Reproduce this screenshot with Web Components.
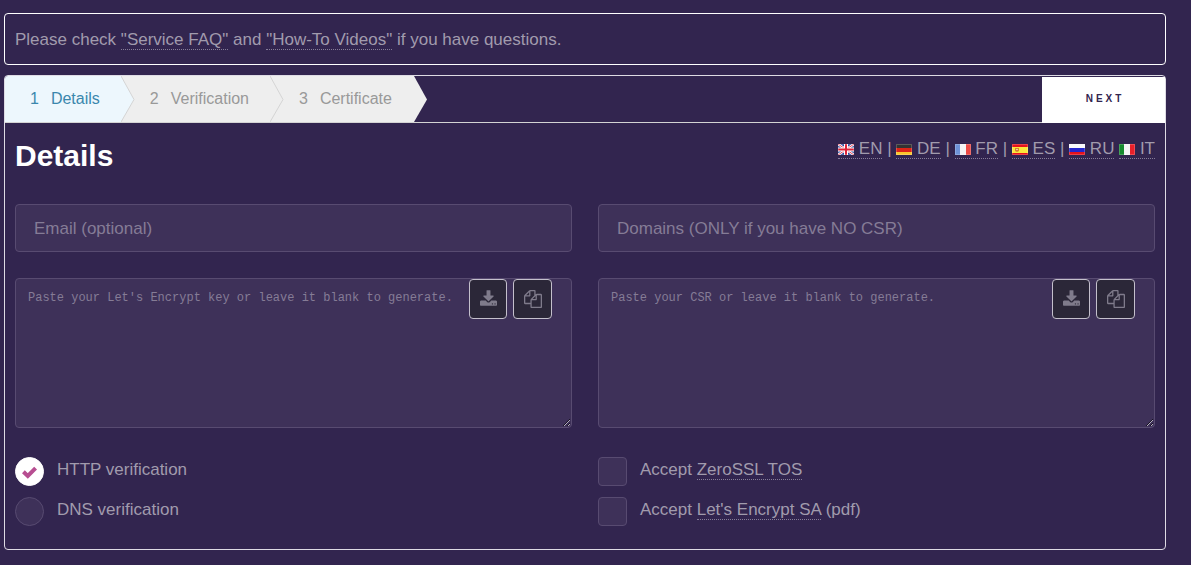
<!DOCTYPE html>
<html lang="en">
<head>
<meta charset="utf-8">
<meta name="viewport" content="width=device-width, initial-scale=1">
<title>Certificate wizard</title>
<style>
  body {
    margin: 0;
    padding: 13px 25px 15px 4px;
    background: #32254f;
    color: #a19bad;
    font: 17px/28px "Liberation Sans", Arial, sans-serif;
    --line: #dedbe4;
    --field: #3e3159;
    --field-line: #584b71;
    --hint: #857c96;
  }
  a { color: inherit; text-decoration: none; border-bottom: 1px dotted #857c98; }
</style>
</head>
<body>
<ssl-notice>Please check <a href="#faq">"Service FAQ"</a> and <a href="#videos">"How-To Videos"</a> if you have questions.</ssl-notice>
<ssl-wizard></ssl-wizard>

<script>
const define = (name, html, setup) => {
  const template = document.createElement('template');
  template.innerHTML = html;
  customElements.define(name, class extends HTMLElement {
    connectedCallback() {
      if (this.shadowRoot) return;
      const root = this.attachShadow({ mode: 'open' });
      root.append(template.content.cloneNode(true));
      if (setup) setup(this, root);
    }
  });
};

define('ssl-notice', `
  <style>
    :host { display: block; border: 1px solid #fff; border-radius: 4px; padding: 12px 10px 10px; margin-bottom: 10px; }
  </style>
  <slot></slot>`);

define('wizard-step', `
  <style>
    :host { display: block; position: relative; height: 46px; padding: 0 21px 0 29px; background: #eee; color: #999; font-size: 16px; line-height: 46px; }
    :host([first]) { padding-left: 25px; border-radius: 3px 0 0 0; }
    :host([last]) { padding-right: 22px; }
    :host([current]) { background: #edf7fd; color: #3a87ad; }
    .number { margin-right: 12px; }
    svg { position: absolute; left: 100%; top: 0; width: 14px; height: 46px; z-index: 1; }
    path { fill: #eee; }
    polyline { fill: none; stroke: #d4d4d4; }
    :host([current]) path { fill: #edf7fd; }
    :host([last]) polyline { display: none; }
  </style>
  <span class="number"></span><slot></slot>
  <svg viewBox="0 0 14 46" aria-hidden="true"><path d="M0 0 13 23.5 0 46z"/><polyline points="0,0 13,23.5 0,46"/></svg>`,
  (el, root) => { root.querySelector('.number').textContent = el.getAttribute('number'); });

define('wizard-bar', `
  <style>
    :host { display: flex; justify-content: space-between; border-bottom: 1px solid #d4d4d4; }
    .steps { display: flex; }
    button { width: 123px; height: 46px; margin: 1px 0 -1px; border: 0; padding: 0 0 2px; background: #fff; color: #32254f; font: bold 10px/44px "Liberation Sans", Arial, sans-serif; letter-spacing: 3px; text-indent: 3px; }
  </style>
  <div class="steps">
    <wizard-step number="1" first current>Details</wizard-step>
    <wizard-step number="2">Verification</wizard-step>
    <wizard-step number="3" last>Certificate</wizard-step>
  </div>
  <button type="button">NEXT</button>`);

const flags = {
  en: '<path fill="#27489c" d="M0 0h16v11H0z"/><path stroke="#fff" stroke-width="2.4" d="M0 0l16 11M16 0L0 11"/><path stroke="#e0485a" stroke-width="1" d="M0 0l16 11M16 0L0 11"/><path stroke="#fff" stroke-width="4" d="M8 0v11M0 5.5h16"/><path stroke="#dc2338" stroke-width="2" d="M8 0v11M0 5.5h16"/>',
  de: '<path fill="#333" d="M0 0h16v4H0z"/><path fill="#dc2418" d="M0 4h16v4H0z"/><path fill="#fbc62c" d="M0 8h16v3H0z"/>',
  fr: '<path fill="#6e93d8" d="M0 0h5v11H0z"/><path fill="#f4f4f4" d="M5 0h6v11H5z"/><path fill="#ec4a45" d="M11 0h5v11h-5z"/>',
  es: '<path fill="#e5141c" d="M0 0h16v11H0z"/><path fill="#fbe83a" d="M0 3h16v6H0z"/><path fill="#d98032" d="M3 4h4v3l-2 1-2-1z"/><path fill="#f6d0a0" d="M4 5h2v1H4z"/>',
  ru: '<path fill="#f8f8fa" d="M0 0h16v4H0z"/><path fill="#2424cc" d="M0 4h16v4H0z"/><path fill="#e4121c" d="M0 8h16v3H0z"/>',
  it: '<path fill="#178a2e" d="M0 0h5v11H0z"/><path fill="#f4f4f4" d="M5 0h6v11H5z"/><path fill="#e8202a" d="M11 0h5v11h-5z"/>'
};
define('lang-link', `
  <style>
    :host { display: inline; }
    a { color: inherit; text-decoration: none; border-bottom: 1px dotted #857c98; }
    svg { width: 16px; height: 11px; vertical-align: -1px; }
  </style>
  <a><svg viewBox="0 0 16 11" aria-hidden="true"><g class="flag"></g><path fill="none" stroke="#fff" stroke-opacity=".2" d="M.5.5h15v10H.5z"/></svg> <slot></slot></a>`,
  (el, root) => {
    const code = el.getAttribute('code');
    root.querySelector('a').href = '#' + code;
    root.querySelector('.flag').innerHTML = flags[code];
  });

define('text-field', `
  <style>
    :host { display: block; }
    input { display: block; box-sizing: border-box; width: 100%; height: 48px; margin: 0; padding: 2px 18px 0; border: 1px solid var(--field-line); border-radius: 4px; background: var(--field); color: #fff; font: inherit; outline: 0; }
    input::placeholder { color: var(--hint); opacity: 1; }
  </style>
  <input>`,
  (el, root) => {
    const input = root.querySelector('input');
    input.type = el.getAttribute('type') || 'text';
    input.placeholder = el.getAttribute('hint');
    input.setAttribute('aria-label', el.getAttribute('hint'));
  });

define('pem-area', `
  <style>
    :host { display: block; position: relative; }
    textarea { display: block; box-sizing: border-box; width: 100%; height: 150px; margin: 0; padding: 9px 12px; border: 1px solid var(--field-line); border-radius: 4px; background: var(--field); color: #fff; font: 12px/20px "Liberation Mono", "Courier New", monospace; resize: vertical; outline: 0; }
    textarea::placeholder { color: var(--hint); opacity: 1; }
    .tools { position: absolute; top: 1px; right: 20px; display: flex; gap: 6px; }
    button { display: grid; justify-items: center; align-items: start; box-sizing: border-box; width: 38px; height: 40px; margin: 0; padding: 10px 0 0; border: 1px solid #c4c0cc; border-radius: 4px; background: #2b2738; color: #7f7b8b; }
    button + button { width: 39px; }
    svg { display: block; width: 17px; height: 16px; fill: currentColor; }
    button + button svg { width: 18px; height: 18px; }
  </style>
  <textarea></textarea>
  <div class="tools">
    <button type="button" aria-label="Download"><svg viewBox="0 0 1664 1536"><path d="M1280 1344q0-26-19-45t-45-19-45 19-19 45 19 45 45 19 45-19 19-45zm256 0q0-26-19-45t-45-19-45 19-19 45 19 45 45 19 45-19 19-45zm128-224v320q0 40-28 68t-68 28h-1472q-40 0-68-28t-28-68v-320q0-40 28-68t68-28h465l135 136q58 56 136 56t136-56l136-136h464q40 0 68 28t28 68zm-325-569q17 41-14 70l-448 448q-18 19-45 19t-45-19l-448-448q-31-29-14-70 17-39 59-39h256v-448q0-26 19-45t45-19h256q26 0 45 19t19 45v448h256q42 0 59 39z"/></svg></button>
    <button type="button" aria-label="Copy"><svg viewBox="0 0 1792 1792"><path d="M1696 384q40 0 68 28t28 68v1216q0 40-28 68t-68 28h-960q-40 0-68-28t-28-68v-288h-544q-40 0-68-28t-28-68v-672q0-40 20-88t48-76l408-408q28-28 76-48t88-20h416q40 0 68 28t28 68v328q68-40 128-40h416zm-544 213l-299 299h299v-299zm-640-384l-299 299h299v-299zm196 647l316-316v-416h-384v416q0 40-28 68t-68 28h-416v640h512v-256q0-40 20-88t48-76zm956 804v-1152h-384v416q0 40-28 68t-68 28h-416v640h896z"/></svg></button>
  </div>`,
  (el, root) => {
    const area = root.querySelector('textarea');
    area.placeholder = el.getAttribute('hint');
    area.setAttribute('aria-label', el.getAttribute('label'));
  });

define('choice-item', `
  <style>
    :host { display: flex; gap: 13px; height: 29px; }
    input { appearance: none; flex: none; box-sizing: border-box; width: 29px; height: 29px; margin: 0; border: 1px solid var(--field-line); border-radius: 4px; background: var(--field); }
    input[type=radio] { border-radius: 50%; }
    .box { display: grid; }
    .box > * { grid-area: 1 / 1; }
    svg { width: 29px; height: 29px; visibility: hidden; pointer-events: none; }
    input:checked { background: #fff; border-color: #fff; }
    input:checked + svg { visibility: visible; }
    label { line-height: 25px; }
  </style>
  <span class="box"><input id="choice"><svg viewBox="0 0 29 29" aria-hidden="true"><path fill="none" stroke="#b74e91" stroke-width="4" d="m8.400 14.800 4.400 4.200 7.800-7.800"/></svg></span>
  <label for="choice"><slot></slot></label>`,
  (el, root) => {
    const input = root.querySelector('input');
    input.type = el.getAttribute('type');
    input.checked = el.hasAttribute('checked');
    if (input.type === 'radio') input.addEventListener('change', () => {
      for (const other of el.parentElement.querySelectorAll('choice-item'))
        if (other !== el) other.shadowRoot.querySelector('input').checked = false;
    });
  });

define('ssl-wizard', `
  <style>
    :host { display: block; border: 1px solid var(--line); border-radius: 4px; }
    main { padding: 10px 10px 23px; }
    header { display: flex; justify-content: space-between; margin-bottom: 26px; }
    h1 { margin: 0; color: #fff; font-size: 30px; line-height: 45px; }
    nav { line-height: 32px; }
    .fields { display: grid; grid-template-columns: 1fr 1fr; gap: 26px; }
    .choices { display: grid; gap: 11px; margin-top: 3px; }
    a { color: inherit; text-decoration: none; border-bottom: 1px dotted #857c98; }
  </style>
  <wizard-bar></wizard-bar>
  <main>
    <header>
      <h1>Details</h1>
      <nav aria-label="Language"><lang-link code="en">EN</lang-link> | <lang-link code="de">DE</lang-link> | <lang-link code="fr">FR</lang-link> | <lang-link code="es">ES</lang-link> | <lang-link code="ru">RU</lang-link> <lang-link code="it">IT</lang-link></nav>
    </header>
    <div class="fields">
      <text-field type="email" hint="Email (optional)"></text-field>
      <text-field hint="Domains (ONLY if you have NO CSR)"></text-field>
      <pem-area label="Account key" hint="Paste your Let's Encrypt key or leave it blank to generate."></pem-area>
      <pem-area label="CSR" hint="Paste your CSR or leave it blank to generate."></pem-area>
      <div class="choices" role="radiogroup" aria-label="Verification method">
        <choice-item type="radio" checked>HTTP verification</choice-item>
        <choice-item type="radio">DNS verification</choice-item>
      </div>
      <div class="choices">
        <choice-item type="checkbox">Accept <a href="#tos">ZeroSSL TOS</a></choice-item>
        <choice-item type="checkbox">Accept <a href="#sa">Let's Encrypt SA</a> (pdf)</choice-item>
      </div>
    </div>
  </main>`);
</script>
</body>
</html>
